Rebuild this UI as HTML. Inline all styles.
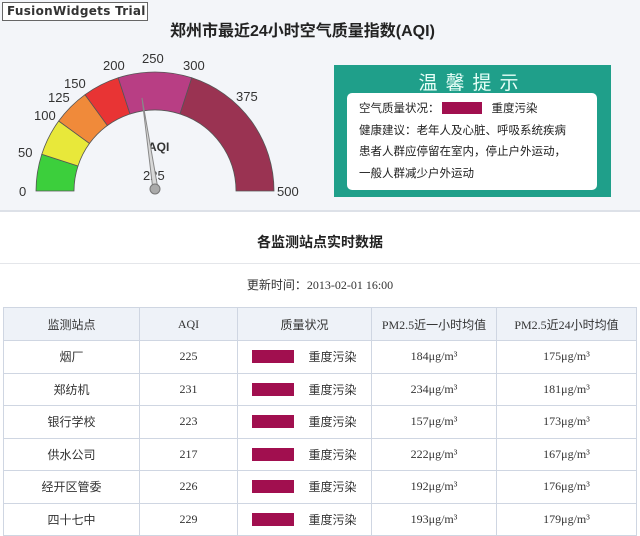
<!DOCTYPE html>
<html><head><meta charset="utf-8"><style>
*{margin:0;padding:0;box-sizing:border-box}
body{width:640px;height:521px;overflow:hidden;background:#fff;font-family:"Liberation Sans","Noto Sans CJK SC",sans-serif;position:relative}
.panel{position:absolute;left:0;top:0;width:640px;height:212px;background:#f3f5f9;border-bottom:2px solid #dde1e8}
.trial{position:absolute;left:2px;top:2px;width:146px;height:19px;background:#fff;border:1px solid #666;font:bold 12px "DejaVu Sans",sans-serif;color:#333;line-height:17px;padding-left:4px;letter-spacing:0.3px}
.ttl{position:absolute;left:170px;top:17px;font-size:16px;font-weight:bold;color:#222;font-family:"Liberation Sans","Noto Sans CJK SC",sans-serif}
.tip{position:absolute;left:334px;top:65px;width:277px;height:132px;background:#1f9f8a}
.tiph{position:absolute;left:0;top:3px;width:100%;text-align:center;color:#e8fff8;font-size:19px;letter-spacing:8px}
.tipb{position:absolute;left:13px;top:28px;width:250px;height:97px;background:#fff;border-radius:5px;padding:6px 0 0 12px;font-size:11.5px;line-height:21.5px;color:#222}
.sw{display:inline-block;width:40px;height:12px;background:#a10f4f;vertical-align:-2px;margin:0 10px 0 2px}
.h2{position:absolute;left:0;width:640px;text-align:center;top:232px;font-size:14px;font-weight:bold;color:#222}
.upd{position:absolute;left:0;width:640px;text-align:center;top:276px;font-size:12px;color:#333;font-family:"Liberation Serif","Noto Sans CJK SC",serif}
.ln{position:absolute;left:0;width:640px;height:1px;background:#e4e6ea}
table{position:absolute;left:3px;top:307px;border-collapse:collapse;font-family:"Liberation Serif","Noto Sans CJK SC",serif;font-size:12px;color:#333}
td{border:1px solid #cfd6e2;height:32.5px;text-align:center}
tr:first-child td{background:#eef2f8;height:33px}
.q{display:inline-block;width:42px;height:13px;background:#a10f4f;vertical-align:-2px;margin-right:14px}
</style></head><body>
<div class="panel">
<div class="trial">FusionWidgets Trial</div>
<div class="ttl">郑州市最近24小时空气质量指数(AQI)</div>
<svg width="330" height="212" style="position:absolute;left:0;top:0" font-family="Liberation Sans,sans-serif" font-size="13" fill="#333">
<path d="M36 191 A119 119 0 0 1 41.8 154.2 L78 166 A81 81 0 0 0 74 191Z" fill="#3ccf3c" stroke="#555" stroke-width="0.8"/>
<path d="M41.8 154.2 A119 119 0 0 1 58.7 121 L89.5 143.4 A81 81 0 0 0 78 166Z" fill="#e8e83a" stroke="#555" stroke-width="0.8"/>
<path d="M58.7 121 A119 119 0 0 1 85 94.7 L107.4 125.5 A81 81 0 0 0 89.5 143.4Z" fill="#f08a3a" stroke="#555" stroke-width="0.8"/>
<path d="M85 94.7 A119 119 0 0 1 118.2 77.8 L130 114 A81 81 0 0 0 107.4 125.5Z" fill="#e83434" stroke="#555" stroke-width="0.8"/>
<path d="M118.2 77.8 A119 119 0 0 1 191.8 77.8 L180 114 A81 81 0 0 0 130 114Z" fill="#b83e84" stroke="#555" stroke-width="0.8"/>
<path d="M191.8 77.8 A119 119 0 0 1 274 191 L236 191 A81 81 0 0 0 180 114Z" fill="#9a3352" stroke="#555" stroke-width="0.8"/>
<text x="19" y="196">0</text><text x="18" y="157">50</text><text x="34" y="120">100</text>
<text x="48" y="102">125</text><text x="64" y="88">150</text><text x="103" y="70">200</text>
<text x="142" y="63">250</text><text x="183" y="70">300</text><text x="236" y="101">375</text>
<text x="277" y="196">500</text>
<text x="148" y="151" font-size="12" font-weight="bold">AQI</text>
<text x="143" y="180">225</text>
<path d="M142 98 L158 189 L153 190 Z" fill="#d8d8d8" stroke="#888" stroke-width="1"/>
<circle cx="155" cy="189" r="5" fill="#aaa" stroke="#777"/>
</svg>
<div class="tip">
<div class="tiph">温馨提示</div>
<div class="tipb">空气质量状况：<span class="sw"></span>重度污染<br>健康建议：老年人及心脏、呼吸系统疾病<br>患者人群应停留在室内，停止户外运动，<br>一般人群减少户外运动</div>
</div>
</div>
<div class="h2">各监测站点实时数据</div>
<div class="ln" style="top:263px"></div>
<div class="upd">更新时间：2013-02-01 16:00</div>
<table>
<tr><td style="width:136px">监测站点</td><td style="width:98px">AQI</td><td style="width:134px">质量状况</td><td style="width:125px">PM2.5近一小时均值</td><td style="width:140px">PM2.5近24小时均值</td></tr>
<tr><td>烟厂</td><td>225</td><td><span class="q"></span>重度污染</td><td>184μg/m³</td><td>175μg/m³</td></tr>
<tr><td>郑纺机</td><td>231</td><td><span class="q"></span>重度污染</td><td>234μg/m³</td><td>181μg/m³</td></tr>
<tr><td>银行学校</td><td>223</td><td><span class="q"></span>重度污染</td><td>157μg/m³</td><td>173μg/m³</td></tr>
<tr><td>供水公司</td><td>217</td><td><span class="q"></span>重度污染</td><td>222μg/m³</td><td>167μg/m³</td></tr>
<tr><td>经开区管委</td><td>226</td><td><span class="q"></span>重度污染</td><td>192μg/m³</td><td>176μg/m³</td></tr>
<tr><td>四十七中</td><td>229</td><td><span class="q"></span>重度污染</td><td>193μg/m³</td><td>179μg/m³</td></tr>
</table>
</body></html>
